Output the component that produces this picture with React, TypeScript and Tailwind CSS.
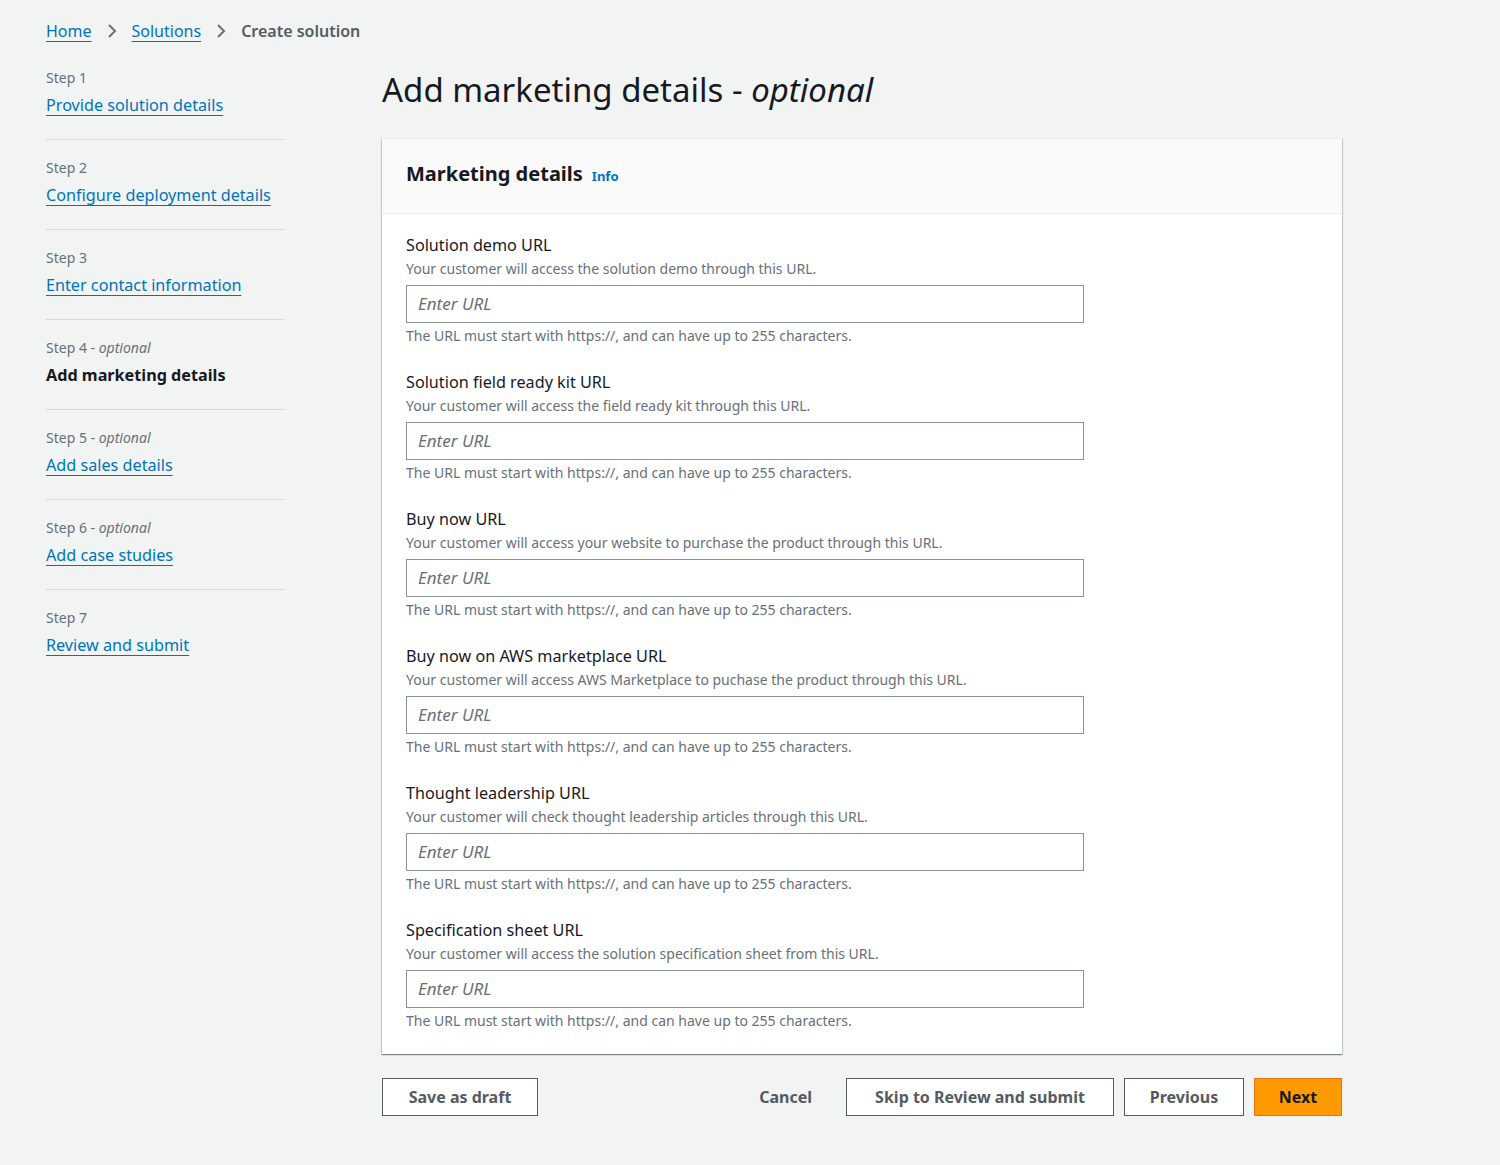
import React from "react";

const steps = [
  { n: "Step 1", opt: false, title: "Provide solution details", active: false },
  { n: "Step 2", opt: false, title: "Configure deployment details", active: false },
  { n: "Step 3", opt: false, title: "Enter contact information", active: false },
  { n: "Step 4", opt: true, title: "Add marketing details", active: true },
  { n: "Step 5", opt: true, title: "Add sales details", active: false },
  { n: "Step 6", opt: true, title: "Add case studies", active: false },
  { n: "Step 7", opt: false, title: "Review and submit", active: false },
];

const fields = [
  { label: "Solution demo URL", desc: "Your customer will access the solution demo through this URL." },
  { label: "Solution field ready kit URL", desc: "Your customer will access the field ready kit through this URL." },
  { label: "Buy now URL", desc: "Your customer will access your website to purchase the product through this URL." },
  { label: "Buy now on AWS marketplace URL", desc: "Your customer will access AWS Marketplace to puchase the product through this URL." },
  { label: "Thought leadership URL", desc: "Your customer will check thought leadership articles through this URL." },
  { label: "Specification sheet URL", desc: "Your customer will access the solution specification sheet from this URL." },
];

function Chevron() {
  return (
    <svg width="16" height="16" viewBox="0 0 16 16" className="mx-[12px]">
      <path d="M5 2l6 6-6 6" fill="none" stroke="#687078" strokeWidth="2" />
    </svg>
  );
}

export default function App() {
  return (
    <div
      className="min-h-[1165px] w-[1500px] bg-[#f2f3f3] text-[#16191f]"
      style={{ fontFamily: '"Noto Sans", "Open Sans", sans-serif' }}
    >
      <div className="flex items-center pl-[46px] pt-[19px] text-[16px] leading-[24px]">
        <a className="text-[#0073bb] underline underline-offset-[4px]">Home</a>
        <Chevron />
        <a className="text-[#0073bb] underline underline-offset-[4px]">Solutions</a>
        <Chevron />
        <span className="font-semibold text-[#545b64]">Create solution</span>
      </div>
      <div className="flex pt-[25px]">
        <div className="ml-[46px] w-[239px]">
          {steps.map((s, i) => (
            <div
              key={i}
              className={`${i === 0 ? "h-[72px]" : "h-[90px] pt-[18px]"} ${i < steps.length - 1 ? "border-b border-[#d5dbdb]" : ""}`}
            >
              <div className="text-[14px] leading-[20px] text-[#687078]">
                {s.n}
                {s.opt && (
                  <span>
                    {" - "}
                    <i>optional</i>
                  </span>
                )}
              </div>
              <div className="mt-[6px] text-[16.2px] leading-[22px]">
                {s.active ? (
                  <span className="font-bold text-[#16191f]">{s.title}</span>
                ) : (
                  <a className="text-[#0073bb] underline underline-offset-[4px]">{s.title}</a>
                )}
              </div>
            </div>
          ))}
        </div>
        <div className="ml-[97px] w-[960px]">
          <h1 className="mt-[-1px] text-[33px] leading-[46px] font-normal">
            Add marketing details - <i>optional</i>
          </h1>
          <div className="mt-[25px] bg-white border-t border-[#eaeded] shadow-[0_1px_1px_0_rgba(0,28,36,0.3),1px_1px_1px_0_rgba(0,28,36,0.15),-1px_1px_1px_0_rgba(0,28,36,0.15)]">
            <div className="flex h-[75px] items-baseline gap-[9px] border-b border-[#eaeded] bg-[#fafafa] px-[24px] pt-[20px]">
              <h2 className="text-[20px] leading-[30px] font-bold">Marketing details</h2>
              <a className="text-[13px] font-bold text-[#0073bb]">Info</a>
            </div>
            <div className="px-[24px] pt-[20px] pb-[23px]">
              {fields.map((f, i) => (
                <div key={i} className={i > 0 ? "mt-[25px]" : ""}>
                  <div className="text-[16.2px] leading-[22px]">{f.label}</div>
                  <div className="mt-[3px] text-[14px] leading-[20px] text-[#687078]">{f.desc}</div>
                  <div className="mt-[6px] flex h-[38px] w-[678px] items-center border border-[#879596] px-[11px] text-[17px] italic text-[#687078]">
                    Enter URL
                  </div>
                  <div className="mt-[3px] text-[14px] leading-[20px] text-[#687078]">
                    The URL must start with https://, and can have up to 255 characters.
                  </div>
                </div>
              ))}
            </div>
          </div>
          <div className="mt-[24px] flex items-center">
            <button className="h-[38px] w-[156px] border border-[#545b64] bg-white text-[16px] font-bold text-[#545b64]">
              Save as draft
            </button>
            <div className="ml-auto flex items-center gap-[10px]">
              <button className="mr-[24px] h-[38px] text-[16px] font-bold text-[#545b64]">Cancel</button>
              <button className="h-[38px] w-[268px] border border-[#545b64] bg-white text-[16px] font-bold text-[#545b64]">
                Skip to Review and submit
              </button>
              <button className="h-[38px] w-[120px] border border-[#545b64] bg-white text-[16px] font-bold text-[#545b64]">
                Previous
              </button>
              <button className="h-[38px] w-[88px] border border-[#ec7211] bg-[#ff9900] text-[16px] font-bold text-[#16191f]">
                Next
              </button>
            </div>
          </div>
        </div>
      </div>
    </div>
  );
}
